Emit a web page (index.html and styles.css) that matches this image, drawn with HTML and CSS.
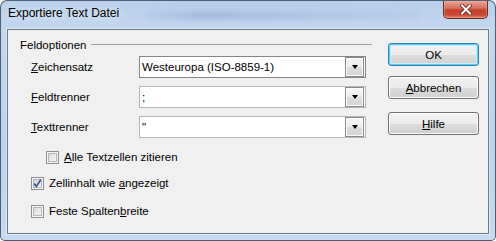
FILE: index.html
```html
<!DOCTYPE html>
<html lang="de">
<head>
  <meta charset="UTF-8">
  <title>Exportiere Text Datei</title>
  <link rel="stylesheet" href="styles.css">
</head>
<body>
  <div class="window">
    <div class="titlebar">
      <span class="title">Exportiere Text Datei</span>
      <span class="glass"></span>
      <span class="close">
        <svg width="12" height="11" viewBox="0 0 12 11">
          <path d="M2 1.5 L10 9.5 M10 1.5 L2 9.5" stroke="#5a2018" stroke-width="3.6" stroke-linecap="square"/>
          <path d="M2 1.5 L10 9.5 M10 1.5 L2 9.5" stroke="#ffffff" stroke-width="2" stroke-linecap="square"/>
        </svg>
      </span>
    </div>

    <div class="client">
      <div class="options">
        <div class="group-head">
          <span>Feldoptionen</span>
          <span class="rule"></span>
        </div>

        <div class="fields">
          <label><u>Z</u>eichensatz</label>
          <div class="combo active">
            <span class="value">Westeuropa (ISO-8859-1)</span>
            <span class="drop"><span class="arrow"></span></span>
          </div>

          <label><u>F</u>eldtrenner</label>
          <div class="combo">
            <span class="value">;</span>
            <span class="drop"><span class="arrow"></span></span>
          </div>

          <label><u>T</u>exttrenner</label>
          <div class="combo">
            <span class="value">"</span>
            <span class="drop"><span class="arrow"></span></span>
          </div>
        </div>

        <div class="check first indent">
          <span class="box"></span>
          <span><u>A</u>lle Textzellen zitieren</span>
        </div>
        <div class="check second">
          <span class="box">
            <svg width="11" height="11" viewBox="0 0 11 11">
              <path d="M2.2 5.6 L4.4 8.4 L8.8 1.8" fill="none" stroke="#3f5494" stroke-width="1.7"/>
            </svg>
          </span>
          <span>Zellinhalt wie <u>a</u>ngezeigt</span>
        </div>
        <div class="check third">
          <span class="box"></span>
          <span>Feste Spalten<u>b</u>reite</span>
        </div>
      </div>

      <div class="actions">
        <button class="btn default">OK</button>
        <button class="btn cancel"><u>A</u>bbrechen</button>
        <button class="btn help"><u>H</u>ilfe</button>
      </div>
    </div>
  </div>
</body>
</html>
```

FILE: styles.css
```css
html, body {
  margin: 0;
  padding: 0;
  background: #ffffff;
}
body {
  font-family: "Liberation Sans", Arial, sans-serif;
  font-size: 11.5px;
  color: #000;
}
u {
  text-decoration: underline;
  text-underline-offset: 1px;
}

/* window frame */
.window {
  width: 494px;
  height: 239px;
  border: 1px solid rgba(40, 55, 75, 0.75);
  border-radius: 7px 7px 5px 5px;
  background: linear-gradient(180deg, #b8d0ea 0%, #c3d8ef 12%, #bcd3ec 60%, #c6dbf1 100%);
  display: flex;
  flex-direction: column;
  overflow: hidden;
}
.titlebar {
  height: 28px;
  padding: 0 7px;
  display: flex;
  align-items: flex-start;
  box-sizing: border-box;
}
.title {
  margin-top: 5px;
  font-size: 12px;
  line-height: 15px;
  white-space: nowrap;
  text-shadow: 0 0 6px rgba(255, 255, 255, 0.9);
}
.glass {
  flex: 1;
  height: 7px;
  margin: 11px 24px 0 26px;
  background: linear-gradient(90deg, rgba(60, 80, 140, 0.05), rgba(50, 70, 140, 0.22) 20%, rgba(70, 90, 150, 0.16) 60%, rgba(60, 80, 140, 0.05));
  filter: blur(3px);
}
.close {
  width: 45px;
  height: 18px;
  box-sizing: border-box;
  border: 1px solid #6a2a1f;
  border-top: none;
  border-radius: 0 0 5px 5px;
  background: linear-gradient(180deg, #e8a294 0%, #d9735f 40%, #c4402a 55%, #c84a33 80%, #e27c63 100%);
  box-shadow: inset 0 0 0 1px rgba(255, 200, 190, 0.35);
  display: flex;
  align-items: center;
  justify-content: center;
}

/* client area */
.client {
  flex: 1;
  margin: 0 6px 6px;
  border: 1px solid #6b7a89;
  background: #f0f0f0;
  display: flex;
  box-shadow: 0 0 0 1px rgba(255, 255, 255, 0.45);
}
.options {
  width: 364px;
  padding-left: 12px;
  box-sizing: border-box;
}
.group-head {
  display: flex;
  align-items: center;
  height: 15px;
  margin-top: 7px;
}
.rule {
  flex: 1;
  margin-left: 4px;
  border-top: 1px solid #a0a0a0;
}

.fields {
  display: grid;
  grid-template-columns: 108px 227px;
  grid-auto-rows: 22px;
  row-gap: 8px;
  margin-top: 4px;
  padding-left: 11px;
}
.fields label {
  align-self: center;
  line-height: 15px;
}
.combo {
  display: flex;
  align-items: center;
  border: 1px solid #b5b7bb;
  background: #fff;
}
.combo.active {
  border-color: #868686;
}
.combo .value {
  flex: 1;
  padding-left: 2px;
  line-height: 15px;
  white-space: nowrap;
}
.drop {
  width: 17px;
  height: 18px;
  margin-right: 1px;
  border: 1px solid #8a8a8a;
  background: linear-gradient(180deg, #f7f7f7 0%, #ececec 50%, #dedede 51%, #d4d4d4 100%);
  box-shadow: inset 0 0 0 1px #fbfbfb;
  display: flex;
  align-items: center;
  justify-content: center;
}
.arrow {
  width: 0;
  height: 0;
  border-left: 3.5px solid transparent;
  border-right: 3.5px solid transparent;
  border-top: 4px solid #000;
}

/* check boxes */
.check {
  display: flex;
  align-items: center;
  height: 13px;
  margin-left: 11px;
  line-height: 15px;
  white-space: nowrap;
}
.check.indent {
  margin-left: 26px;
}
.check.first {
  margin-top: 13px;
}
.check.second {
  margin-top: 13px;
}
.check.third {
  margin-top: 15px;
}
.box {
  width: 13px;
  height: 13px;
  box-sizing: border-box;
  margin-right: 5px;
  border: 1px solid #8e8f8f;
  background: linear-gradient(135deg, #cdd0d4 0%, #e9eaec 55%, #f8f8f8 100%);
  box-shadow: inset 0 0 0 1px #f6f6f6, inset 0 0 0 2px #b3b6ba;
  display: flex;
  align-items: center;
  justify-content: center;
}

/* buttons */
.actions {
  width: 91px;
  margin-left: 16px;
  display: flex;
  flex-direction: column;
}
.btn {
  height: 23px;
  padding: 0;
  font-family: inherit;
  font-size: 11.5px;
  color: #000;
  border: 1px solid #707070;
  border-radius: 3px;
  background: linear-gradient(180deg, #f2f2f2 0%, #ebebeb 50%, #dddddd 51%, #cfcfcf 100%);
  box-shadow: inset 0 0 0 1px #fcfcfc;
}
.btn.default {
  margin-top: 13px;
  border-color: #3c7fb1;
  box-shadow: inset 0 0 0 1px #4fd0f6, inset 0 0 0 2px #c8eefb;
}
.btn.cancel {
  margin-top: 10px;
}
.btn.help {
  margin-top: 13px;
}
```
